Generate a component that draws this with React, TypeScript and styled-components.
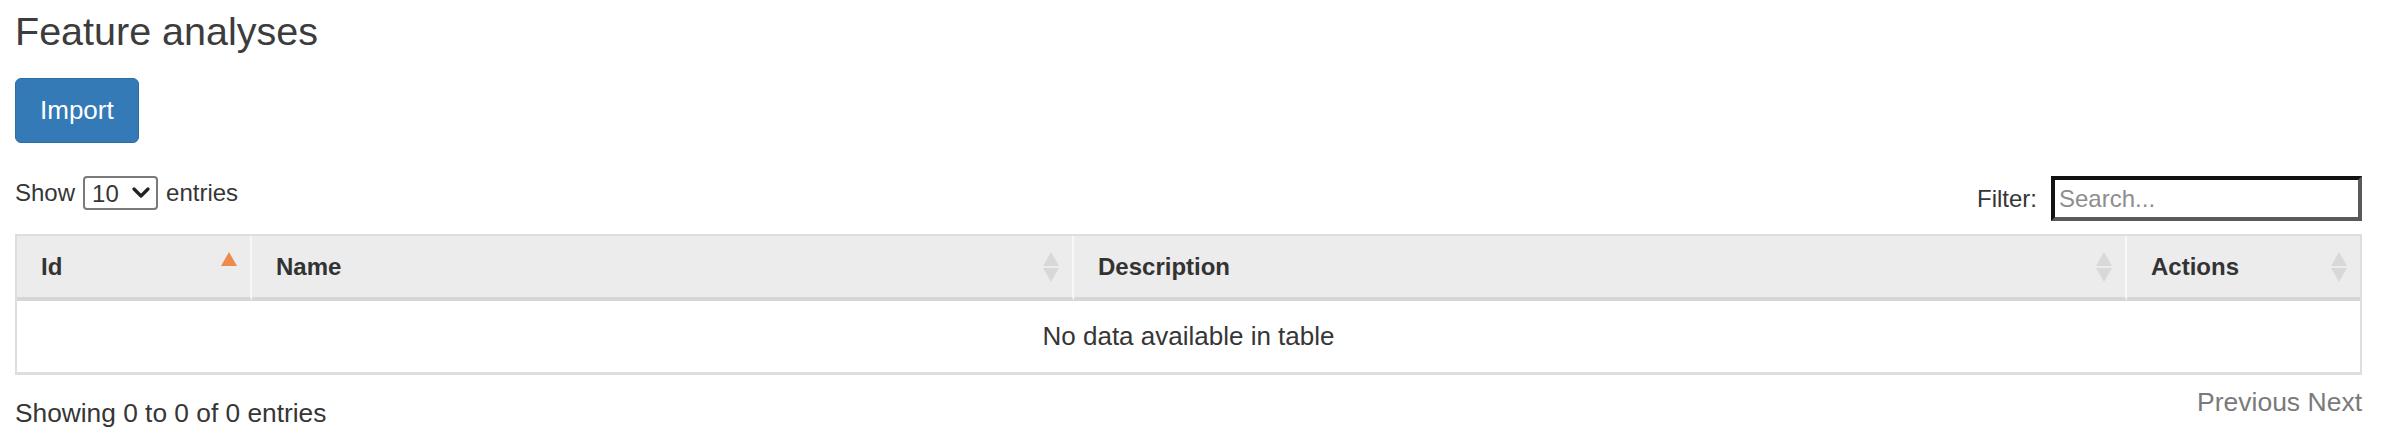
import React from "react";
import styled, { createGlobalStyle } from "styled-components";

const GlobalStyle = createGlobalStyle`
  body {
    margin: 0;
    background: #fff;
    color: #363636;
    font-family: "Liberation Sans", Arial, Helvetica, sans-serif;
  }
`;

const columns = [
  { key: "id", label: "Id", width: 235, sort: "asc" as const },
  { key: "name", label: "Name", width: 822, sort: "none" as const },
  { key: "description", label: "Description", width: 1053, sort: "none" as const },
  { key: "actions", label: "Actions", width: 233, sort: "none" as const },
];

const SortIcon: React.FC<{ state: "asc" | "none" }> = ({ state }) => (
  <SortSvg width="16" height="32" viewBox="0 0 16 32">
    <polygon points="8,1 16,15 0,15" fill={state === "asc" ? "#ee8a4c" : "#d8d8d8"} />
    {state === "none" && <polygon points="0,17 16,17 8,31" fill="#d8d8d8" />}
  </SortSvg>
);

const App: React.FC = () => {
  return (
    <Page>
      <GlobalStyle />
      <Title>Feature analyses</Title>
      <div>
        <ImportButton type="button">Import</ImportButton>
      </div>

      <Controls>
        <LengthLabel>
          Show
          <SelectWrap>
            <LengthSelect defaultValue="10">
              <option value="10">10</option>
              <option value="25">25</option>
              <option value="50">50</option>
              <option value="100">100</option>
            </LengthSelect>
            <Chevron width="18" height="11" viewBox="0 0 18 11">
              <path d="M2 2 L9 9 L16 2" fill="none" stroke="#222" strokeWidth="3.2" strokeLinecap="round" strokeLinejoin="round" />
            </Chevron>
          </SelectWrap>
          entries
        </LengthLabel>
        <FilterLabel>
          Filter:
          <SearchInput placeholder="Search..." />
        </FilterLabel>
      </Controls>

      <Table>
        <colgroup>
          {columns.map((c) => (
            <Col key={c.key} $w={c.width} />
          ))}
        </colgroup>
        <thead>
          <tr>
            {columns.map((c) => (
              <Th key={c.key}>
                {c.label}
                <SortIcon state={c.sort} />
              </Th>
            ))}
          </tr>
        </thead>
        <tbody>
          <tr>
            <EmptyCell colSpan={4}>No data available in table</EmptyCell>
          </tr>
        </tbody>
      </Table>

      <Footer>
        <Info>Showing 0 to 0 of 0 entries</Info>
        <Paginate>
          <PageLink>Previous</PageLink> <PageLink>Next</PageLink>
        </Paginate>
      </Footer>
    </Page>
  );
};

export default App;

const Page = styled.div`
  padding: 0 20px 20px 15px;
`;

const Title = styled.h2`
  margin: 9px 0 0;
  font-size: 39.5px;
  font-weight: 400;
  line-height: 45px;
  color: #3c3c3c;
`;

const ImportButton = styled.button`
  margin-top: 24px;
  padding: 13px 24px;
  font-family: "Liberation Sans", Arial, sans-serif;
  font-size: 26px;
  line-height: 37px;
  color: #fff;
  background: #337ab7;
  border: 1px solid #2e6da4;
  border-radius: 6px;
  cursor: pointer;
`;

const Controls = styled.div`
  display: flex;
  justify-content: space-between;
  align-items: flex-start;
  margin-top: 33px;
`;

const LengthLabel = styled.label`
  display: flex;
  align-items: center;
  gap: 8px;
  font-size: 24px;
  line-height: 34px;
`;

const SelectWrap = styled.span`
  position: relative;
  display: inline-block;
  width: 75px;
  height: 34px;
`;

const LengthSelect = styled.select`
  appearance: none;
  width: 100%;
  height: 100%;
  box-sizing: border-box;
  padding: 0 0 0 7px;
  font-family: "Liberation Sans", Arial, sans-serif;
  font-size: 24px;
  color: #363636;
  background: #fff;
  border: 2px solid #7a7a7a;
  border-radius: 4px;
`;

const Chevron = styled.svg`
  position: absolute;
  right: 8px;
  top: 11px;
  pointer-events: none;
`;

const FilterLabel = styled.label`
  display: flex;
  align-items: center;
  gap: 14px;
  font-size: 24px;
  line-height: 45px;
`;

const SearchInput = styled.input`
  width: 311px;
  height: 45px;
  box-sizing: border-box;
  padding: 0 4px;
  font-family: "Liberation Sans", Arial, sans-serif;
  font-size: 24px;
  color: #333;
  border-style: solid;
  border-width: 4px;
  border-color: #111 #5a5a5a #5a5a5a #111;
  outline: none;

  &::placeholder {
    color: #8e8e8e;
  }
`;

const Table = styled.table`
  width: 100%;
  margin-top: 13px;
  table-layout: fixed;
  border-collapse: separate;
  border-spacing: 0;
  border: 2px solid #dedede;
  border-bottom-width: 3px;
`;

const Col = styled.col<{ $w: number }>`
  width: ${({ $w }) => $w}px;
`;

const Th = styled.th`
  position: relative;
  box-sizing: border-box;
  padding: 14px 24px;
  text-align: left;
  font-size: 24px;
  font-weight: 700;
  line-height: 33px;
  color: #333;
  background: #ececec;
  border-bottom: 4px solid #d6d6d6;
  border-right: 2px solid #f8f8f8;

  &:last-child {
    border-right: none;
  }
`;

const SortSvg = styled.svg`
  position: absolute;
  right: 13px;
  top: 15px;
`;

const EmptyCell = styled.td`
  padding: 17px 24px 17px;
  text-align: center;
  font-size: 26px;
  line-height: 37px;
`;

const Footer = styled.div`
  display: flex;
  justify-content: space-between;
  align-items: flex-start;
`;

const Info = styled.div`
  padding-top: 20px;
  font-size: 26.3px;
  line-height: 37px;
`;

const Paginate = styled.div`
  margin-top: 9px;
  font-size: 26.5px;
  line-height: 37px;
  color: #7a7a7a;
`;

const PageLink = styled.span`
  cursor: default;
`;
